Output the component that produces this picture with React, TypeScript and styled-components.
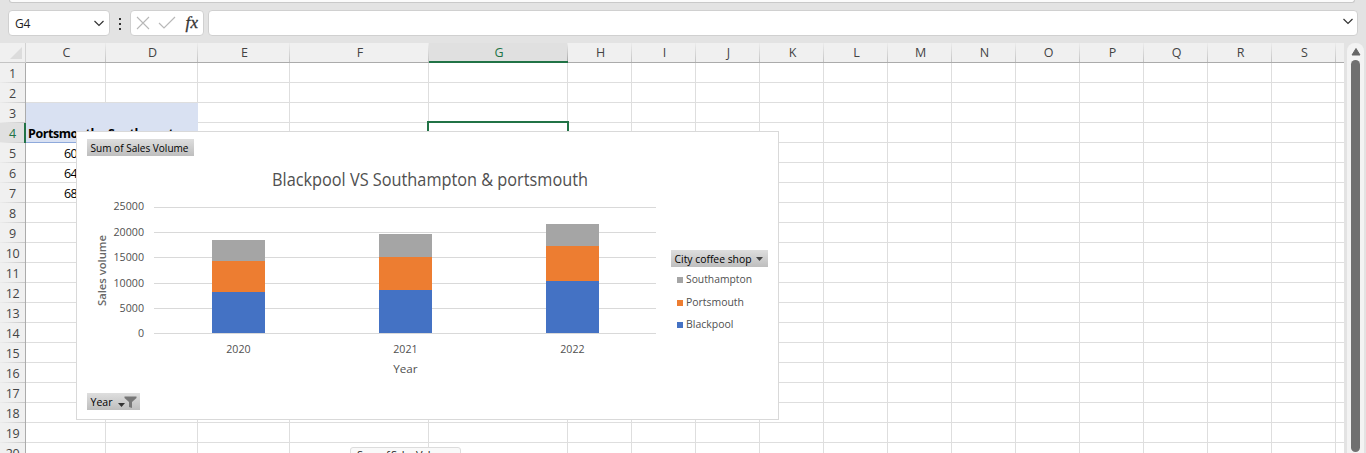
import React from 'react';
import styled, { createGlobalStyle } from 'styled-components';

const ui = `"Open Sans", "Noto Sans", sans-serif`;
const GRID = '#dedede';

const Global = createGlobalStyle`
  * { box-sizing: border-box; }
  html, body { margin: 0; padding: 0; overflow: hidden; background: #e3e3e3; }
  body { font-family: ${ui}; color: #000; }
`;

const Window = styled.div`
  position: relative;
  width: 1366px;
  height: 453px;
  overflow: hidden;
  background: #e3e3e3;
`;
const RibbonEdge = styled.div`
  height: 3px;
  margin: 0 11px 0 9px;
  background: #fbfbfb;
  border: solid #c9c9c9;
  border-width: 0 1px 1px 1px;
  border-radius: 0 0 6px 6px;
`;
const FormulaBar = styled.div`
  display: flex;
  height: 40px;
  padding: 7px 8px 0 8px;
`;
const Field = styled.div<{ $w?: number }>`
  display: flex;
  align-items: center;
  flex: ${p => (p.$w ? `0 0 ${p.$w}px` : '1')};
  height: 26px;
  background: #fff;
  border: 1px solid #d0d0d0;
  border-radius: 4px;
  font-size: 12px;
`;
const NameText = styled.span`
  flex: 1;
  padding-left: 6px;
  letter-spacing: -0.1px;
  color: #222;
`;
const Dots = styled.div`
  width: 20px;
  display: flex;
  flex-direction: column;
  align-items: center;
  gap: 3px;
  padding-top: 8px;
`;
const Dot = styled.i`
  width: 2px;
  height: 2px;
  background: #333;
`;
const Spring = styled.div`
  flex: 1;
`;
const Body = styled.div`
  display: flex;
  height: 410px;
`;
const Sheet = styled.div`
  width: 1344px;
  height: 410px;
  overflow: hidden;
  background: #fff;
`;
const HeaderRow = styled.div`
  display: flex;
  height: 20px;
  background: #f0f0f0;
`;
const Corner = styled.div`
  width: 26px;
  border-right: 1px solid #d2d2d2;
  border-bottom: 1px solid #c4c4c4;
  padding: 4px 0 0 10px;
  line-height: 0;
`;
const ColHead = styled.div<{ $w: number; $on?: boolean }>`
  flex: 0 0 ${p => p.$w}px;
  border-bottom: ${p => (p.$on ? '2px solid #217346' : '1px solid #ababab')};
  background: ${p => (p.$w < 20
    ? 'none'
    : `linear-gradient(#ececec, ${p.$on ? '#a8a8a8' : '#c4c4c4'}) right / 1px 100% no-repeat`)};
  background-color: ${p => (p.$on ? '#e0e0e0' : 'transparent')};
  color: ${p => (p.$on ? '#217346' : '#444')};
  font-size: 12.5px;
  line-height: 19px;
  padding-left: 1px;
  text-align: center;
`;
const Row = styled.div`
  display: flex;
  height: 20px;
`;
const RowHead = styled.div<{ $on?: boolean }>`
  flex: 0 0 26px;
  border-right: ${p => (p.$on ? '2px solid #217346' : '1px solid #ababab')};
  background: linear-gradient(90deg, #ececec, #c8c8c8) bottom / 100% 1px no-repeat;
  background-color: ${p => (p.$on ? '#e0e0e0' : '#f0f0f0')};
  color: ${p => (p.$on ? '#217346' : '#444')};
  font-size: 12.5px;
  letter-spacing: -0.3px;
  line-height: 21px;
  padding-left: ${p => (p.$on ? 1 : 0)}px;
  text-align: center;
`;
const Cell = styled.div<{ $w: number; $fill?: boolean; $line?: boolean; $num?: boolean }>`
  flex: 0 0 ${p => p.$w}px;
  border-right: ${p => (p.$w < 20 ? 0 : 1)}px solid ${p => (p.$fill ? '#d9e1f2' : GRID)};
  border-bottom: 1px solid ${p => (p.$line ? '#8ea9db' : p.$fill ? '#d9e1f2' : GRID)};
  background: ${p => (p.$fill ? '#d9e1f2' : '#fff')};
  font-size: 12.5px;
  font-weight: ${p => (p.$num ? 400 : 700)};
  letter-spacing: ${p => (p.$num ? '-0.6px' : '-0.45px')};
  line-height: 21px;
  padding-left: ${p => (p.$num ? 38 : 2)}px;
  white-space: nowrap;
`;
const ScrollTrack = styled.div`
  width: 17px;
  margin-left: 3px;
  background: #f3f3f3;
  border-radius: 8px 8px 0 0;
  display: flex;
  flex-direction: column;
  align-items: center;
  padding-top: 4px;
`;
const Thumb = styled.div`
  width: 9px;
  height: 392px;
  margin-top: 4px;
  background: #707070;
  border-radius: 5px;
`;
const Selection = styled.div`
  position: absolute;
  left: 427px;
  top: 121px;
  width: 142px;
  height: 23px;
  border: 2px solid #217346;
`;
const ChartFrame = styled.div`
  position: absolute;
  left: 76px;
  top: 131px;
  width: 703px;
  height: 289px;
  background: #fff;
  border: 1px solid #d9d9d9;
`;
const Plot = styled.svg`
  display: block;
  font-family: ${ui};
`;
const PivotButton = styled.div<{ $x: number; $y: number; $w: number }>`
  position: absolute;
  left: ${p => p.$x}px;
  top: ${p => p.$y}px;
  width: ${p => p.$w}px;
  height: 17px;
  background: linear-gradient(#dedede, #bebebe);
  line-height: 0;
`;
const FloatLabel = styled.div`
  position: absolute;
  left: 350px;
  top: 447px;
  width: 111px;
  height: 22px;
  padding-left: 6px;
  background: #f9f9f9;
  border: 1px solid #dcdcdc;
  border-radius: 3px;
  font-size: 11px;
  line-height: 14px;
  letter-spacing: -0.7px;
  color: #222;
  white-space: nowrap;
`;

const columns: [string, number][] = [
  ['C', 80], ['D', 92], ['E', 92], ['F', 139], ['G', 139],
  ...'HIJKLMNOPQRS'.split('').map(c => [c, 64] as [string, number]),
  ['', 8],
];
const rows = Array.from({ length: 20 }, (_, i) => i + 1);
const values: Record<string, string> = {
  C4: 'Portsmouth', D4: 'Southampton', C5: '6080', C6: '6450', C7: '6820',
};
const ticks: [string, number][] = [
  ['25000', 207], ['20000', 232], ['15000', 257], ['10000', 283], ['5000', 308], ['0', 333],
];
const bars = [
  { year: '2020', x: 212, gray: 240, orange: 261, blue: 292 },
  { year: '2021', x: 379, gray: 234, orange: 257, blue: 290 },
  { year: '2022', x: 546, gray: 224, orange: 246, blue: 281 },
];
const legend: [string, string, number, number][] = [
  ['Southampton', '#a5a5a5', 279, 66],
  ['Portsmouth', '#ed7d31', 302, 58],
  ['Blackpool', '#4472c4', 324, 47.5],
];

type LabelProps = {
  x: number; y: number; w: number; size?: number; fill?: string; weight?: number; children: string;
};
const Label = ({ x, y, w, size = 11.5, fill = '#505050', weight = 400, children }: LabelProps) => (
  <text x={x} y={y} fontSize={size} fontWeight={weight} fill={fill} textLength={w} lengthAdjust="spacingAndGlyphs">
    {children}
  </text>
);

const Chart = () => (
  <ChartFrame>
    <Plot width="701" height="287" viewBox="77 132 701 287">
      <Label x={272} y={186} w={316} size={18}>Blackpool VS Southampton &amp; portsmouth</Label>
      {ticks.map(([t, y]) => (
        <g key={t}>
          <rect x="154" y={y} width="502" height="1" fill="#d9d9d9" />
          <Label x={144 - t.length * 6.1} y={y === 207 ? 210 : y + 4} w={t.length * 6.1}>{t}</Label>
        </g>
      ))}
      {bars.map(b => (
        <g key={b.year}>
          <rect x={b.x} y={b.gray} width="53" height={b.orange - b.gray} fill="#a5a5a5" />
          <rect x={b.x} y={b.orange} width="53" height={b.blue - b.orange} fill="#ed7d31" />
          <rect x={b.x} y={b.blue} width="53" height={333 - b.blue} fill="#4472c4" />
          <Label x={b.x + 14.3} y={353} w={24.3}>{b.year}</Label>
        </g>
      ))}
      <Label x={393.3} y={373} w={24.3}>Year</Label>
      <g transform="translate(106 306) rotate(-90)">
        <Label x={0} y={0} w={71} weight={600} fill="#686868">Sales volume</Label>
      </g>
      {legend.map(([name, color, y, w]) => (
        <g key={name}>
          <rect x="677" y={y - 2} width="6" height="6" fill={color} />
          <Label x={686} y={y + 4} w={w}>{name}</Label>
        </g>
      ))}
    </Plot>
    <PivotButton $x={10} $y={7} $w={107}>
      <Plot width="107" height="17"><Label x={3.5} y={13} w={98} fill="#000">Sum of Sales Volume</Label></Plot>
    </PivotButton>
    <PivotButton $x={594} $y={118} $w={97}>
      <Plot width="97" height="17">
        <Label x={3.5} y={13} w={77} fill="#000">City coffee shop</Label>
        <path d="M85 7h7l-3.5 4z" fill="#444" />
      </Plot>
    </PivotButton>
    <PivotButton $x={10} $y={261} $w={53}>
      <Plot width="53" height="17">
        <Label x={3.5} y={13} w={22} fill="#000">Year</Label>
        <path d="M31 10h7l-3.5 4z" fill="#333" />
        <path d="M37.5 3.5h12v1.5l-4.5 4v6l-3-1v-5l-4.5-4z" fill="#777" />
      </Plot>
    </PivotButton>
  </ChartFrame>
);

const Chevron = () => (
  <svg width="12" height="8" viewBox="0 0 12 8" fill="none" stroke="#333" strokeWidth="1.2">
    <path d="M1.5 2L6 6.500l4.500-4.500" />
  </svg>
);
const RaisedChevron = styled.div`
  display: flex;
  padding: 0 3px 4px 0;
`;

export default function App() {
  return (
    <Window>
      <Global />
      <RibbonEdge />
      <FormulaBar>
        <Field $w={102}>
          <NameText>G4</NameText>
          <Chevron />
          <svg width="4" height="8" />
        </Field>
        <Dots><Dot /><Dot /><Dot /></Dots>
        <Field $w={74}>
          <svg width="72" height="24" viewBox="131 11 72 24" fill="none">
            <path d="M137 17l12 12M149 17l-12 12" stroke="#b8b8b8" strokeWidth="1.1" />
            <path d="M159 23l5 5 11-11" stroke="#b8b8b8" strokeWidth="1.2" />
            <text x="185.5" y="28" fontFamily="Liberation Serif, serif" fontStyle="italic" fontSize="17" fill="#333" stroke="#333" strokeWidth=".3" textLength="12.5">fx</text>
          </svg>
        </Field>
        <svg width="4" height="1" />
        <Field>
          <Spring />
          <RaisedChevron><Chevron /></RaisedChevron>
        </Field>
      </FormulaBar>
      <Body>
        <Sheet>
          <HeaderRow>
            <Corner>
              <svg width="12" height="12"><path d="M12 0v12H0z" fill="#dcdcdc" /></svg>
            </Corner>
            {columns.map(([c, w]) => (
              <ColHead key={c} $w={w} $on={c === 'G'}>{c}</ColHead>
            ))}
          </HeaderRow>
          {rows.map(r => (
            <Row key={r}>
              <RowHead $on={r === 4}>{r}</RowHead>
              {columns.map(([c, w]) => (
                <Cell
                  key={c}
                  $w={w}
                  $fill={(c === 'C' || c === 'D') && (r === 3 || r === 4)}
                  $line={(c === 'C' || c === 'D') && r === 4}
                  $num={r > 4}
                >
                  {values[c + r]}
                </Cell>
              ))}
            </Row>
          ))}
        </Sheet>
        <ScrollTrack>
          <svg width="10" height="9"><path d="M1 8L5 1.5 9 8z" fill="#666" stroke="#666" strokeLinejoin="round" /></svg>
          <Thumb />
        </ScrollTrack>
      </Body>
      <Selection />
      <Chart />
      <FloatLabel>Sum of Sales Volume</FloatLabel>
    </Window>
  );
}
